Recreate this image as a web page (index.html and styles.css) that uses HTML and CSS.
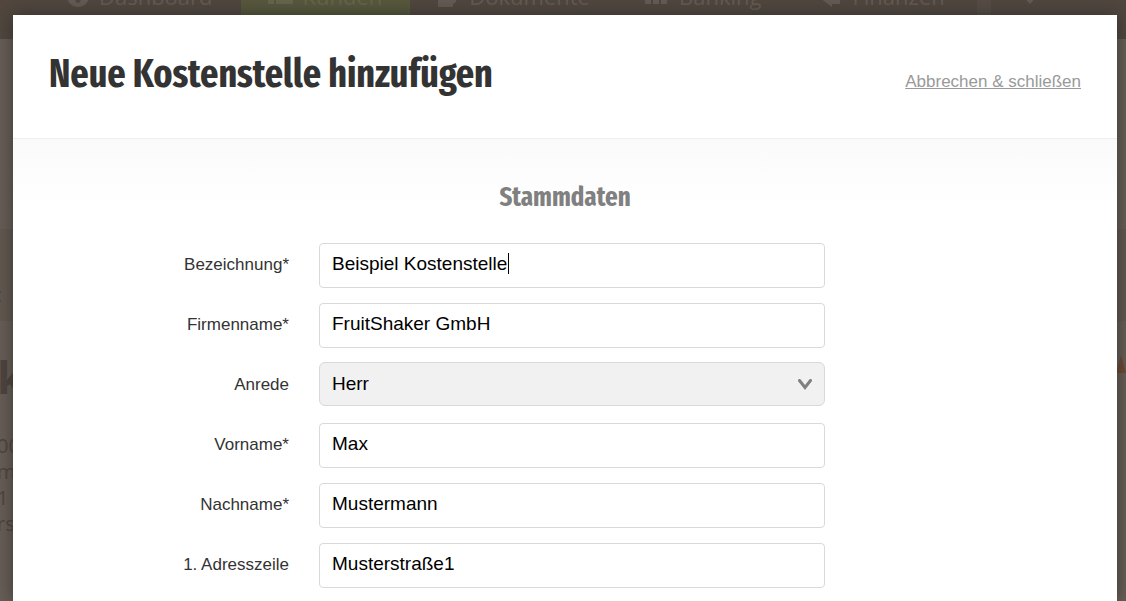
FILE: index.html
```html
<!DOCTYPE html>
<html lang="de">
<head>
<meta charset="utf-8">
<title>Neue Kostenstelle hinzufügen</title>
<meta name="viewport" content="width=device-width, initial-scale=1">
<link rel="stylesheet" href="styles.css">
</head>
<body>
<div class="page" aria-hidden="true">
  <div class="nav">
    <span class="tab"><svg width="22" height="22" viewBox="0 0 22 22"><circle cx="11" cy="11" r="11"/><path class="hole" d="M10 4h2l1 10a2.500 2.500 0 1 1-4 0z"/></svg>Dashboard</span>
    <span class="tab active"><svg width="25" height="22" viewBox="0 0 25 22"><path d="M0 8h6v11H0zM8 10l5-4V0h3v7h9v12H8z"/></svg>Kunden</span>
    <span class="tab"><svg width="22" height="22" viewBox="0 0 22 22"><path d="M4 2h15v15l-3 2v3H1V7z"/></svg>Dokumente</span>
    <span class="tab wide"><svg width="22" height="22" viewBox="0 0 22 22"><path d="M0 10h6v9H0zM8 3h6v16H8zM16 7h6v12h-6z"/></svg>Banking</span>
    <span class="tab wide"><svg width="20" height="22" viewBox="0 0 20 22"><path d="M20 9v10h-8v3L0 13l12-9v5z"/></svg>Finanzen</span>
    <span class="divider"></span>
    <span class="more"><svg width="20" height="22" viewBox="0 0 20 22"><path d="M0 8h20L10 19z"/></svg></span>
  </div>
  <div class="behind">
    <div class="behind-panel">:</div>
    <div class="behind-title">k</div>
    <div class="behind-text">00<br>m<br>1<br>rs</div>
  </div>
  <svg class="marker" width="10" height="20" viewBox="0 0 10 20"><path d="M5 2L10 20H0z"/></svg>
</div>
<main class="dialog" role="dialog" aria-labelledby="dialog-title">
  <header class="dialog-head">
    <h1 id="dialog-title">Neue Kostenstelle hinzufügen</h1>
    <a class="close" href="#">Abbrechen &amp; schließen</a>
  </header>
  <form class="form">
    <h2>Stammdaten</h2>
    <div class="row">
      <label for="bezeichnung">Bezeichnung*</label>
      <div class="control"><input id="bezeichnung" type="text" value="Beispiel Kostenstelle"><span class="caret"></span></div>
    </div>
    <div class="row">
      <label for="firma">Firmenname*</label>
      <div class="control"><input id="firma" type="text" value="FruitShaker GmbH"></div>
    </div>
    <div class="row">
      <label for="anrede">Anrede</label>
      <div class="control">
        <select id="anrede"><option>Herr</option><option>Frau</option></select>
        <svg class="chevron" width="14" height="11" viewBox="0 0 14 11"><path d="M1.500 1.500L7 8.500l5.500-7"/></svg>
      </div>
    </div>
    <div class="row">
      <label for="vorname">Vorname*</label>
      <div class="control"><input id="vorname" type="text" value="Max"></div>
    </div>
    <div class="row">
      <label for="nachname">Nachname*</label>
      <div class="control"><input id="nachname" type="text" value="Mustermann"></div>
    </div>
    <div class="row">
      <label for="adresse">1. Adresszeile</label>
      <div class="control"><input id="adresse" type="text" value="Musterstraße1"></div>
    </div>
  </form>
</main>
</body>
</html>
```

FILE: styles.css
```css
* {
  box-sizing: border-box;
}

body {
  margin: 0;
  min-height: 100vh;
  display: flex;
  position: relative;
  background: #675e56;
  font-family: "Liberation Sans", Arial, sans-serif;
  color: #333;
}

/* Dimmed page under the dialog */
.page {
  position: absolute;
  inset: 0;
  overflow: hidden;
  font-family: "Open Sans", sans-serif;
  color: #655b54;
}

.nav {
  display: flex;
  height: 78px;
  margin-top: -39px;
  padding-left: 40px;
  background: #51473f;
  font-size: 22px;
  line-height: 70px;
  white-space: nowrap;
}

.tab {
  display: flex;
  gap: 10px;
  padding: 0 28px 0 27px;
}

.wide {
  gap: 12px;
  padding-right: 32px;
}

.tab svg,
.more svg {
  margin-top: 24px;
  fill: #655b54;
}

.tab .hole {
  fill: #51473f;
}

.active {
  background: #57583d;
  color: #65664b;
}

.active svg {
  fill: #65664b;
}

.divider {
  width: 14px;
  background: #574d46;
}

.more {
  padding-left: 29px;
}

.behind {
  margin-left: -3px;
  color: #4f453f;
}

.behind-panel {
  height: 92px;
  margin-top: 190px;
  padding-top: 52px;
  background: #625850;
  font-size: 20px;
}

.behind-title {
  margin-top: 24px;
  font-size: 44px;
  line-height: 64px;
  font-weight: 700;
}

.behind-text {
  margin-top: 24px;
  font-size: 20px;
  line-height: 26px;
}

.marker {
  position: absolute;
  right: 0;
  top: 353px;
  fill: #6b4a35;
}

/* Dialog */
.dialog {
  position: relative;
  flex: 1;
  margin: 15px 9px 0 13px;
  background: #fff;
  box-shadow: 0 0 16px rgba(30, 30, 30, 0.6);
}

.dialog-head {
  display: flex;
  align-items: center;
  justify-content: space-between;
  padding: 32px 36px 36px;
  border-bottom: 1px solid #eee;
}

h1,
h2 {
  margin: 0;
  font-family: "Fira Sans Extra Condensed", "Open Sans Condensed", "Roboto Condensed", "Liberation Sans Narrow", "DejaVu Sans Condensed", sans-serif;
  font-weight: 700;
}

h1 {
  font-size: 39px;
  line-height: 55px;
}

.close {
  padding-top: 14px;
  font-size: 17px;
  line-height: 20px;
  color: #999;
  text-decoration: underline;
}

.form {
  display: flex;
  flex-direction: column;
  gap: 15px;
  padding: 38px 36px 14px;
  background: linear-gradient(#fafafa, #fff 70px);
}

h2 {
  margin-bottom: 11px;
  font-size: 27px;
  line-height: 40px;
  text-align: center;
  color: #808080;
}

.row {
  display: grid;
  grid-template-columns: 240fr 506fr 226fr;
  column-gap: 30px;
  align-items: start;
}

.row label {
  text-align: right;
  font-size: 17px;
  line-height: 43px;
}

.control {
  position: relative;
}

.control input,
.control select {
  display: block;
  width: 100%;
  height: 45px;
  padding: 0 12px 4px;
  border: 1px solid #d9d9d9;
  border-radius: 4px;
  background: #fff;
  color: #000;
  font-family: inherit;
  font-size: 19px;
  outline: none;
}

.control select {
  appearance: none;
  height: 44px;
  margin: -1px 0 2px;
  padding-bottom: 2px;
  border-radius: 6px;
  background: #f1f1f1;
}

.caret {
  position: absolute;
  left: 189px;
  top: 10px;
  width: 1px;
  height: 21px;
  background: #000;
}

.chevron {
  position: absolute;
  right: 13px;
  top: 16px;
  fill: none;
  stroke: #808080;
  stroke-width: 3;
  stroke-linecap: round;
  pointer-events: none;
}
```
